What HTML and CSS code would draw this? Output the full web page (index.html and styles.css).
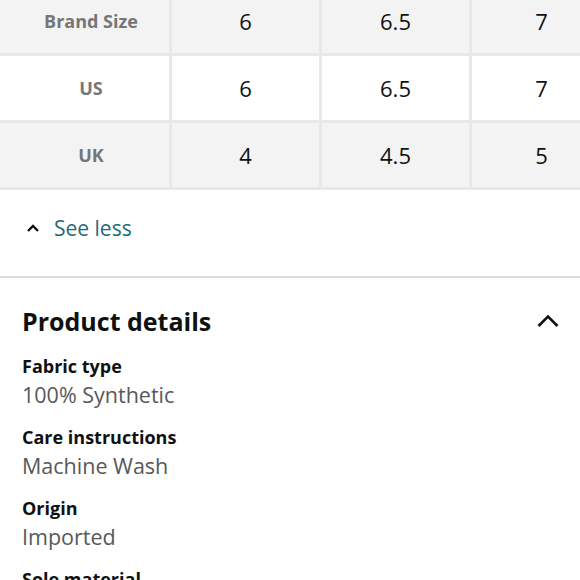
FILE: index.html
```
<!DOCTYPE html>
<html>
<head>
<meta charset="utf-8">
<link rel="stylesheet" href="styles.css">
</head>
<body>
<div class="page">
  <div class="table-wrap">
    <div class="size-table">
      <div class="cell head shade">Brand Size</div>
      <div class="cell shade">6</div>
      <div class="cell shade">6.5</div>
      <div class="cell shade">7</div>
      <div class="cell head">US</div>
      <div class="cell">6</div>
      <div class="cell">6.5</div>
      <div class="cell">7</div>
      <div class="cell head shade">UK</div>
      <div class="cell shade">4</div>
      <div class="cell shade">4.5</div>
      <div class="cell shade">5</div>
    </div>
  </div>
  <div class="see-less">
    <svg class="chev-small" width="14" height="10" viewBox="0 0 14 10"><path d="M2 8 L7 3 L12 8" fill="none" stroke="#111" stroke-width="2.4"/></svg>
    <span class="link">See less</span>
  </div>
  <div class="divider"></div>
  <section class="details">
    <div class="details-head">
      <h2>Product details</h2>
      <svg class="chev" width="24" height="16" viewBox="0 0 24 16"><path d="M2.5 13 L12 3.5 L21.5 13" fill="none" stroke="#111" stroke-width="2.6"/></svg>
    </div>
    <div class="item"><div class="label">Fabric type</div><div class="value">100% Synthetic</div></div>
    <div class="item"><div class="label">Care instructions</div><div class="value">Machine Wash</div></div>
    <div class="item"><div class="label">Origin</div><div class="value">Imported</div></div>
    <div class="item"><div class="label">Sole material</div><div class="value">Rubber</div></div>
  </section>
</div>
</body>
</html>
```
FILE: styles.css
```
html, body {
  margin: 0;
  padding: 0;
  background: #fff;
  overflow: hidden;
}
body {
  font-family: "Open Sans", "Noto Sans", sans-serif;
  color: #0f1111;
  width: 580px;
  height: 580px;
}
.table-wrap {
  overflow: hidden;
  width: 580px;
  margin-top: -11px;
}
.size-table {
  display: grid;
  grid-template-columns: 169px 147px 147px 139px;
  grid-auto-rows: 64px;
  gap: 3px;
  background: #e8e8e8;
  padding-bottom: 3px;
  width: max-content;
}
.cell {
  background: #fff;
  display: flex;
  align-items: center;
  justify-content: center;
  font-size: 22px;
  color: #111;
}
.cell.shade {
  background: #f3f3f3;
}
.cell.head {
  font-weight: 700;
  font-size: 18px;
  color: #767676;
  padding-left: 13px;
}
.see-less {
  display: flex;
  align-items: center;
  height: 76px;
  padding-left: 26px;
  gap: 14px;
}
.link {
  font-size: 21px;
  color: #1c6b7a;
}
.divider {
  height: 2px;
  background: #dcdcdc;
  margin-top: 10px;
}
.details {
  padding: 0 20px 0 22px;
}
.details-head {
  display: flex;
  justify-content: space-between;
  align-items: center;
  margin-top: 23px;
  height: 40px;
}
.details-head h2 {
  margin: 0;
  font-size: 25px;
  font-weight: 700;
}
.item {
  margin-top: 12px;
}
.item + .item {
  margin-top: 14px;
}
.label {
  font-size: 18px;
  font-weight: 700;
  line-height: 26px;
}
.value {
  font-size: 21.5px;
  color: #565959;
  line-height: 31px;
}
```
